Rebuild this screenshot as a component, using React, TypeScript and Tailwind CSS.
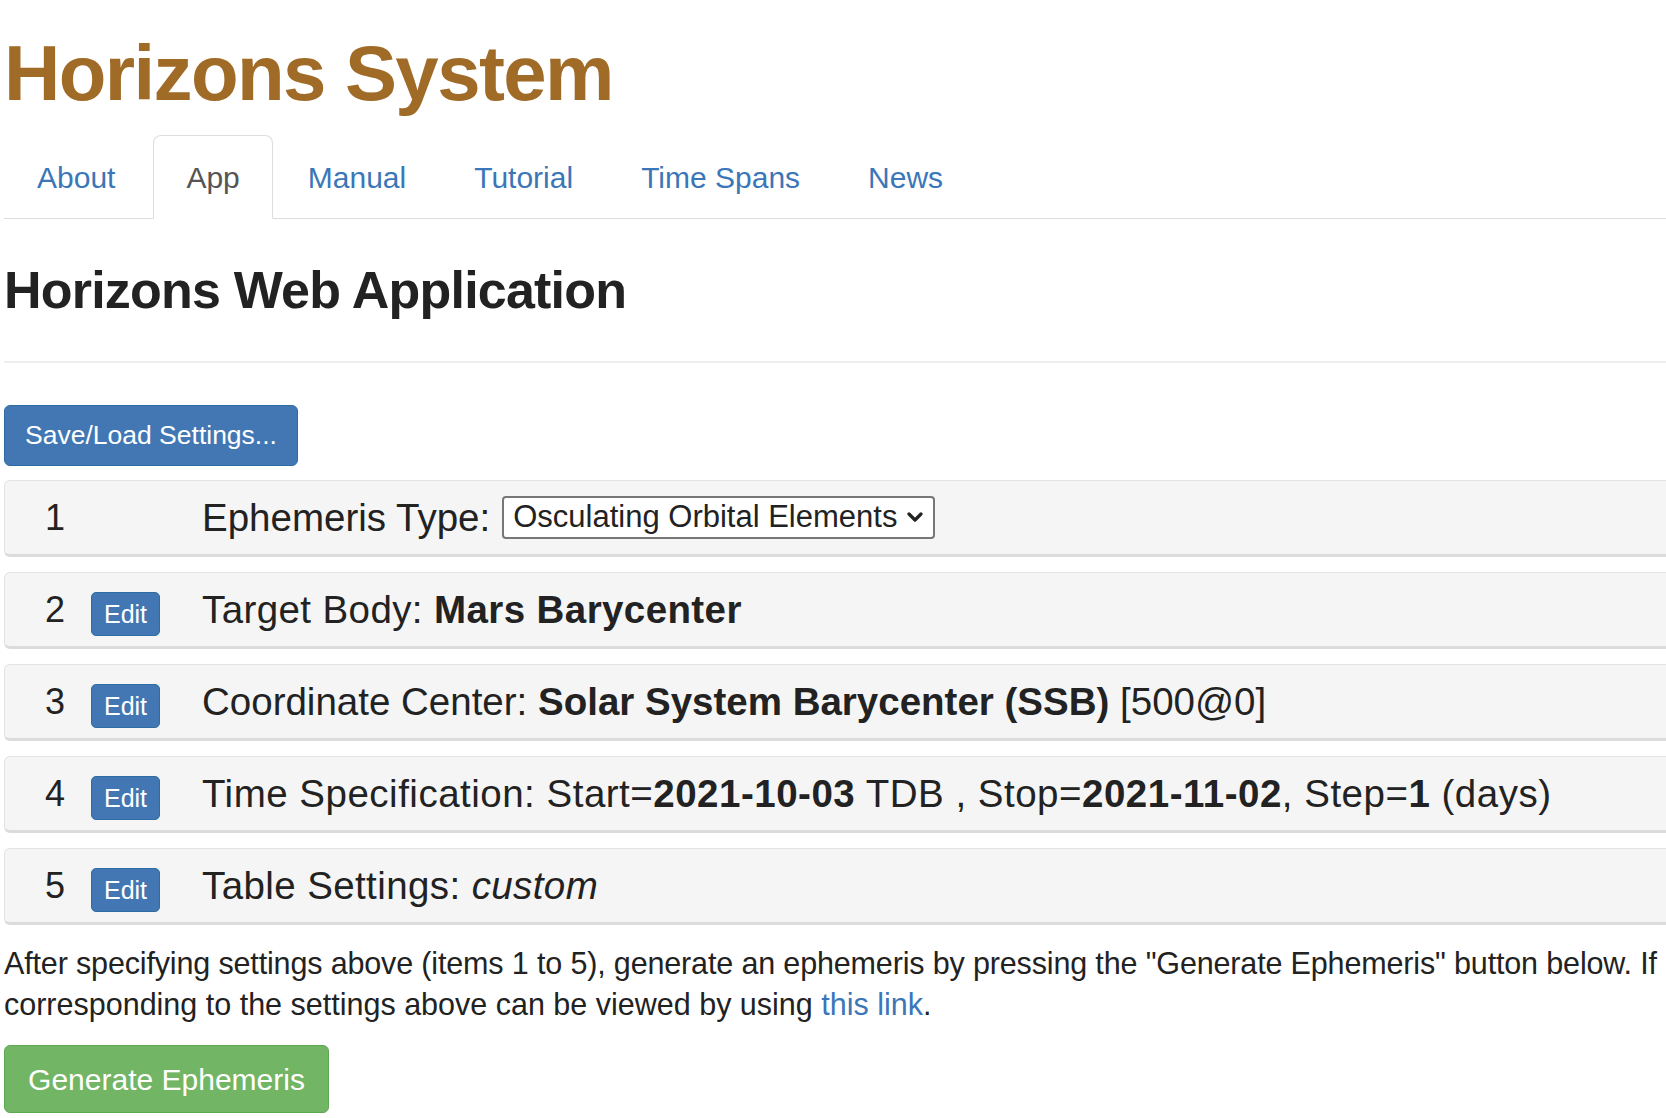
import React from 'react';

const tabs = ['About', 'App', 'Manual', 'Tutorial', 'Time Spans', 'News'];

function EditButton() {
  return (
    <button className="h-[44px] w-[69px] rounded-[5px] border border-[#2e6da4] bg-[#4277b4] text-[25px] leading-none text-white">
      Edit
    </button>
  );
}

function Chevron() {
  return (
    <svg width="16" height="11" viewBox="0 0 16 11" className="ml-[10px]">
      <path d="M2 2 L8 8 L14 2" fill="none" stroke="#222" strokeWidth="3.2" strokeLinecap="round" strokeLinejoin="round" />
    </svg>
  );
}

function SettingRow({ num, edit = true, children }: { num: number; edit?: boolean; children: React.ReactNode }) {
  return (
    <div className="flex h-[77px] items-center rounded-[6px] border border-[#e3e3e3] border-b-[3px] border-b-[#dcdcdc] bg-[#f5f5f5] text-[38.5px] text-[#222]">
      <div className="ml-[30px] w-[40px] text-center text-[36px]">{num}</div>
      <div className="ml-[16px] w-[69px]">{edit && <EditButton />}</div>
      <div className="ml-[42px] flex items-center whitespace-nowrap">{children}</div>
    </div>
  );
}

export default function App() {
  return (
    <div className="h-[1118px] w-full overflow-hidden bg-white font-['Liberation_Sans',Arial,sans-serif] text-[#333]">
      <div className="w-[1900px] pl-[4px]">
        <h1 className="mt-[34px] text-[78px] font-bold leading-none tracking-[-1.6px] text-[#a06b27]">Horizons System</h1>

        <ul className="mt-[23px] flex border-b border-[#ddd]">
          {tabs.map((t) => (
            <li key={t} className={t === 'About' ? '-mb-px mr-[5px]' : '-mb-px mr-[2px]'}>
              <a
                className={
                  t === 'App'
                    ? 'flex h-[84px] items-center rounded-t-[8px] border border-[#ddd] border-b-white bg-white px-[32px] text-[30px] text-[#555]'
                    : 'flex h-[84px] items-center border border-transparent px-[32px] text-[30px] text-[#3b77b8]'
                }
              >
                {t}
              </a>
            </li>
          ))}
        </ul>

        <h2 className="mt-[45px] text-[52px] font-bold leading-none tracking-[-0.8px] text-[#222]">Horizons Web Application</h2>
        <div className="mt-[45px] border-t-2 border-[#eee]" />

        <button className="mt-[42px] flex h-[61px] w-[294px] items-center justify-center rounded-[6px] border border-[#2e6da4] bg-[#4277b4] text-[26.5px] text-white">
          Save/Load Settings...
        </button>

        <div className="mt-[14px] flex flex-col gap-[15px]">
          <SettingRow num={1} edit={false}>
            <span>Ephemeris Type:</span>
            <div className="ml-[12px] flex h-[43px] w-[433px] items-center rounded-[4px] border-2 border-[#777] bg-white pl-[9px] text-[31px]">
              <span>Osculating Orbital Elements</span>
              <Chevron />
            </div>
          </SettingRow>
          <SettingRow num={2}>
            <span className="tracking-[0.4px]">
              Target Body: <b>Mars Barycenter</b>
            </span>
          </SettingRow>
          <SettingRow num={3}>
            <span>
              Coordinate Center: <b>Solar System Barycenter (SSB)</b> [500@0]
            </span>
          </SettingRow>
          <SettingRow num={4}>
            <span className="tracking-[0.5px]">
              Time Specification: Start=<b>2021-10-03</b> TDB , Stop=<b>2021-11-02</b>, Step=<b>1</b> (days)
            </span>
          </SettingRow>
          <SettingRow num={5}>
            <span className="tracking-[0.4px]">
              Table Settings: <i>custom</i>
            </span>
          </SettingRow>
        </div>

        <div className="mt-[18px] text-[30.5px] leading-[41px] text-[#222]">
          <div className="whitespace-nowrap tracking-[-0.15px]">
            After specifying settings above (items 1 to 5), generate an ephemeris by pressing the "Generate Ephemeris" button below. If
          </div>
          <div className="whitespace-nowrap">
            corresponding to the settings above can be viewed by using <a className="text-[#3b77b8]">this link</a>.
          </div>
        </div>

        <button className="mt-[20px] flex h-[68px] w-[325px] items-center justify-center rounded-[6px] border border-[#5fa853] bg-[#72b565] text-[30px] text-white">
          Generate Ephemeris
        </button>
      </div>
    </div>
  );
}
